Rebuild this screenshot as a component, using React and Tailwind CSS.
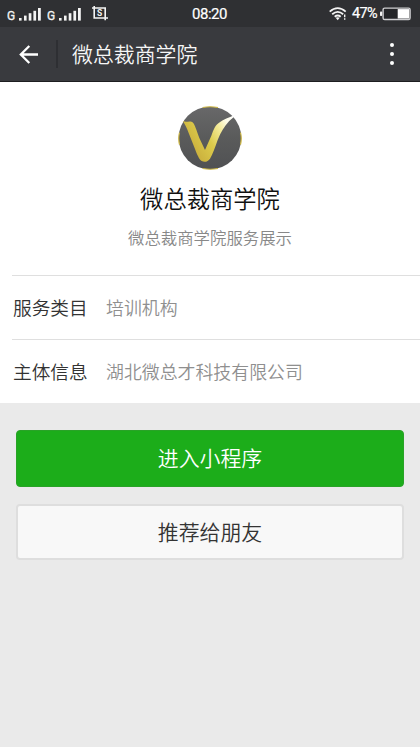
import React from "react";

const details = [
  { label: "服务类目", value: "培训机构" },
  { label: "主体信息", value: "湖北微总才科技有限公司" },
];

const Signal = () => (
  <svg width="35" height="16" viewBox="0 0 35 16" fill="#f4f4f4">
    <text x="0" y="14.3" fontSize="12" fontWeight="400" fontFamily="Roboto, sans-serif" stroke="#f4f4f4" strokeWidth="0.3">
      G
    </text>
    <rect x="12" y="12" width="2.6" height="2.6" />
    <rect x="17" y="9.6" width="2.6" height="5" />
    <rect x="21.7" y="7.2" width="2.7" height="7.4" />
    <rect x="26.4" y="4.8" width="2.7" height="9.8" />
    <rect x="31" y="2" width="2.8" height="12.6" />
  </svg>
);

const CropIcon = () => (
  <svg width="16" height="16" viewBox="0 0 16 16" fill="none" stroke="#f4f4f4" strokeWidth="1.6">
    <path d="M0 2H13.2V14.2M2.2 0V12H16" />
    <text
      x="7.7"
      y="10"
      fontSize="8.5"
      fontWeight="700"
      textAnchor="middle"
      fontFamily="Roboto, sans-serif"
      fill="#f4f4f4"
      stroke="none"
    >
      S
    </text>
  </svg>
);

const WifiIcon = () => (
  <svg width="18" height="14" viewBox="0 0 18 14" fill="none" stroke="#f4f4f4" strokeWidth="1.8">
    <path d="M0.7 4.6Q8.7 -2.4 16.7 4.6" />
    <path d="M3.2 7.3Q8.7 2.5 14.2 7.3" />
    <path d="M5.7 9.8Q8.7 7.3 11.7 9.8" />
    <path d="M6.7 10.8L8.7 13.2L10.7 10.8Q8.7 9.7 6.7 10.8Z" fill="#f4f4f4" stroke="none" />
    <path d="M15.7 7.6V10.2M15.7 11.2V12.8" strokeWidth="1.4" />
  </svg>
);

const BatteryIcon = () => (
  <svg width="32" height="14" viewBox="0 0 32 14">
    <rect x="0" y="4.5" width="2.2" height="4.5" rx="0.8" fill="#f4f4f4" />
    <rect x="3.1" y="1.1" width="27" height="11.4" rx="1.6" fill="#242528" stroke="#cfcfd1" strokeWidth="1.4" />
    <rect x="17.7" y="2.1" width="11.5" height="9.4" fill="#ffffff" />
  </svg>
);

const Logo = () => (
  <svg width="64" height="64" viewBox="22 18 192 192">
    <defs>
      <linearGradient id="disc" x1="0" y1="0" x2="0" y2="1">
        <stop offset="0" stopColor="#686869" />
        <stop offset="0.5" stopColor="#5a5b5b" />
        <stop offset="1" stopColor="#505153" />
      </linearGradient>
      <linearGradient id="stroke" x1="38" y1="150" x2="190" y2="50" gradientUnits="userSpaceOnUse">
        <stop offset="0" stopColor="#c4a638" />
        <stop offset="0.45" stopColor="#dccb4b" />
        <stop offset="0.7" stopColor="#f4eb9a" />
        <stop offset="0.85" stopColor="#fdfbe6" />
        <stop offset="1" stopColor="#ffffff" />
      </linearGradient>
    </defs>
    <circle cx="118" cy="114" r="94" fill="url(#disc)" />
    <path
      d="M96 22.5Q118 18 142 22.5M96 205.5Q118 210 142 205.5M26.5 98Q22 115 26.5 134M209.5 98Q214 115 209.5 134"
      fill="none"
      stroke="#cdb640"
      strokeWidth="3.5"
    />
    <path
      d="M37 63C47 69 58 60 67 68C72 73 78 91 86 114L103 150L122 107C129 88 134 76 144 69C158 57 175 53 194 44C190 53 181 57 175 64C161 79 151 96 141 120C133 142 126 163 118 176C112 185 102 188 93 183C85 178 79 163 73 147L54 99C48 82 43 75 37 63Z"
      fill="url(#stroke)"
    />
  </svg>
);

const StatusBar = () => (
  <div className="h-[27px] bg-[#2f3033] flex items-start justify-between pl-[7px] pr-2 text-white font-normal font-[Roboto,sans-serif]">
    <div className="w-[160px] flex items-start pt-[6px]">
      <Signal />
      <div className="ml-[5px]">
        <Signal />
      </div>
      <div className="ml-[10px]">
        <CropIcon />
      </div>
    </div>
    <span className="pt-px text-[15px] leading-[27px] tracking-[-0.5px] [-webkit-text-stroke:0.2px_white]">08:20</span>
    <div className="w-[160px] h-[27px] flex items-center justify-end">
      <WifiIcon />
      <span className="ml-[5px] w-7 text-[14.5px] tracking-[-0.7px] [-webkit-text-stroke:0.2px_white]">47%</span>
      <BatteryIcon />
    </div>
  </div>
);

const Header = () => (
  <div className="h-[55px] bg-[#393a3e] border-b border-[#1d1d20] flex items-center">
    <button type="button" className="ml-[19px]" aria-label="返回">
      <svg width="20" height="20" viewBox="0 0 20 20" fill="none" stroke="#ffffff" strokeWidth="2.3">
        <path d="M19 10.5H2M10.3 2L1.8 10.5L10.3 19" />
      </svg>
    </button>
    <div className="ml-[17px] w-0.5 h-7 bg-[#2e2f33]" />
    <h1 className="ml-[14px] pb-0.5 text-[20.9px] leading-[30px] text-[#f6f6f6]">微总裁商学院</h1>
    <button type="button" className="ml-auto mr-[26px] flex flex-col gap-[5px]" aria-label="更多">
      <span className="size-1 rounded-full bg-white" />
      <span className="size-1 rounded-full bg-white" />
      <span className="size-1 rounded-full bg-white" />
    </button>
  </div>
);

const App = () => {
  return (
    <div className="h-screen w-full overflow-hidden bg-[#eaeaea] font-[350] font-['Noto_Sans_CJK_SC',sans-serif]">
      <StatusBar />
      <Header />

      {/* Profile */}
      <div className="h-[321px] bg-white flex flex-col">
        <div className="h-[193px] pt-6 flex flex-col items-center">
          <Logo />
          <h2 className="mt-[10px] text-[23.3px] leading-9 text-[#111111]">微总裁商学院</h2>
          <p className="mt-[9px] text-[16.4px] leading-6 text-[#888888]">微总裁商学院服务展示</p>
        </div>

        {/* Details */}
        {details.map((item) => (
          <div key={item.label} className="ml-3 h-16 border-t-[1.5px] border-[#dfdfdf] flex items-center">
            <span className="w-[94px] pl-px text-[18.7px] text-[#333333]">{item.label}</span>
            <span className="text-[17.9px] text-[#8f8f8f]">{item.value}</span>
          </div>
        ))}
      </div>

      {/* Buttons */}
      <div className="px-4 pt-[27px] flex flex-col gap-[17px]">
        <button
          type="button"
          className="h-[57px] rounded border border-[#29a327] bg-[#1cad1a] pb-px text-[20.9px] text-white"
        >
          进入小程序
        </button>
        <button
          type="button"
          className="h-14 rounded border-2 border-[#dedede] bg-[#f8f8f8] text-[20.9px] text-[#333333]"
        >
          推荐给朋友
        </button>
      </div>
    </div>
  );
};

export default App;
